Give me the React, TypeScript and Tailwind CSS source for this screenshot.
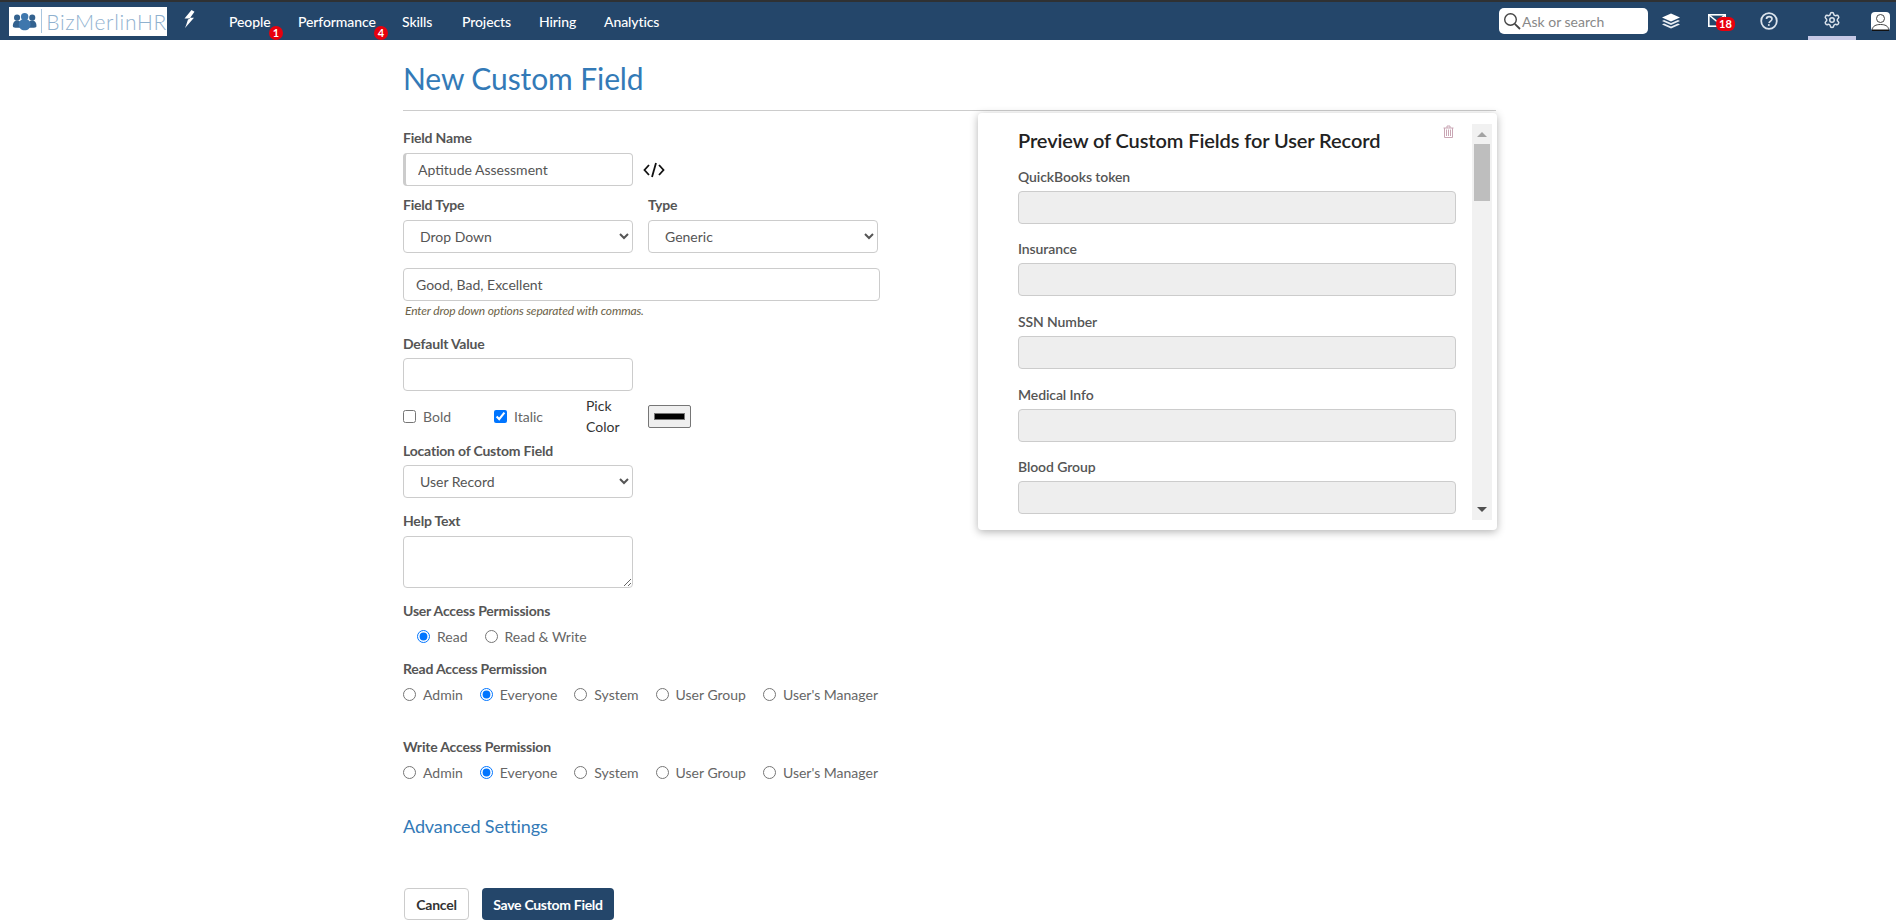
import React from "react";
import { Settings } from "lucide-react";

const Label = ({ children, className = "" }: { children: React.ReactNode; className?: string }) => (
  <label className={`block text-[14px] leading-[20px] font-bold text-[#555] tracking-[-0.2px] ${className}`}>{children}</label>
);

const inputCls = "block h-[33px] border border-[#ccc] rounded-[4px] bg-white text-[14px] text-[#555] outline-none";

const Sel = ({ value, className = "" }: { value: string; className?: string }) => (
  <select defaultValue={value} className={`${inputCls} pl-[12px] pr-[2px] ${className}`}>
    <option>{value}</option>
  </select>
);

const Radio = ({ label, checked, name }: { label: string; checked?: boolean; name: string }) => (
  <label className="flex items-center text-[14px] text-[#666]">
    <input type="radio" name={name} defaultChecked={checked} className="w-[13px] h-[13px] m-0 mr-[7px]" />
    {label}
  </label>
);

const PermRow = ({ name }: { name: string }) => (
  <div className="flex items-center gap-[17px] h-[20px] mt-[5px]">
    <Radio name={name} label="Admin" />
    <Radio name={name} label="Everyone" checked />
    <Radio name={name} label="System" />
    <Radio name={name} label="User Group" />
    <Radio name={name} label="User's Manager" />
  </div>
);

const PreviewField = ({ label, mb = "mb-[14px]" }: { label: string; mb?: string }) => (
  <div className={mb}>
    <div className="text-[14px] leading-[20px] font-semibold text-[#555] tracking-[-0.1px] mb-[4px]">{label}</div>
    <div className="h-[33px] bg-[#eee] border border-[#ccc] rounded-[4px]" />
  </div>
);

const Logo = () => (
  <div className="w-[158px] h-[29px] bg-white flex items-center pl-[3px] ml-[9px]">
    <svg width="30" height="22" viewBox="0 0 30 22">
      <circle cx="6" cy="7" r="3.6" fill="#33628f" />
      <circle cx="24" cy="7" r="3.6" fill="#33628f" />
      <path d="M1 17c0-4 2-6.5 5-6.5s4 1 4 3v5.5H4c-2 0-3-.8-3-2z" fill="#33628f" />
      <path d="M29 17c0-4-2-6.5-5-6.5s-4 1-4 3v5.5h6c2 0 3-.8 3-2z" fill="#33628f" />
      <circle cx="15" cy="6" r="4.4" fill="#3f77ad" />
      <path d="M8 15c0-4 3-6.5 7-6.5s7 2.500 7 6.500c0 4-3 7-7 7s-7-3-7-7z" fill="#3f77ad" />
    </svg>
    <div className="w-px h-[24px] bg-[#a9c6df] ml-[4px] mr-[4px]" />
    <span className="text-[21px] font-light tracking-[0.7px] text-[#8fb1cf] leading-none">BizMerlinHR</span>
  </div>
);

const NavItem = ({ label, w, badge }: { label: string; w: string; badge?: string }) => (
  <div className={`relative ${w} text-white text-[14px] font-medium tracking-[-0.1px]`}>
    {label}
    {badge && (
      <span className="absolute -bottom-[8px] bg-[#e8000d] text-white font-bold text-[11px] leading-[14px] w-[14px] h-[14px] rounded-full text-center" style={{ left: label.length > 6 ? 76 : 40 }}>
        {badge}
      </span>
    )}
  </div>
);

export default function App() {
  return (
    <div className="min-h-[924px] bg-white font-['Lato',sans-serif]">
      <header className="h-[40px] bg-[#24466a] border-t-2 border-[#2f3133] flex items-center relative">
        <Logo />
        <svg width="16" height="18" viewBox="0 0 16 18" className="ml-[15px] mr-[31px] -mt-[4px]">
          <path d="M9.500 0 2.500 8.500h3.800L4.200 15l-1.200 3 9-10.200H8.200L12.500 1.800z" fill="#fff" />
          <path d="M7.500 8 6 9.500" stroke="#24466a" strokeWidth="1" />
        </svg>
        <NavItem label="People" w="w-[69px]" badge="1" />
        <NavItem label="Performance" w="w-[104px]" badge="4" />
        <NavItem label="Skills" w="w-[60px]" />
        <NavItem label="Projects" w="w-[77px]" />
        <NavItem label="Hiring" w="w-[65px]" />
        <NavItem label="Analytics" w="w-[70px]" />
        <div className="ml-auto flex items-center">
          <div className="w-[149px] h-[26px] bg-white rounded-[5px] flex items-center pl-[4px] mr-[13px]">
            <svg width="18" height="18" viewBox="0 0 18 18" fill="none" stroke="#444" strokeWidth="1.400">
              <circle cx="7.500" cy="7.500" r="5.800" />
              <path d="M11.800 11.800 17 17" strokeWidth="1.800" />
            </svg>
            <span className="text-[14px] text-[#888] ml-[1px]">Ask or search</span>
          </div>
          <svg width="20" height="16" viewBox="0 0 20 16" className="mr-[27px]">
            <path d="M10 0.500 19 4.500 10 8.500 1 4.500z" fill="#fff" />
            <path d="M3 7 1 8 10 12 19 8 17 7 10 10z" fill="#e8edf3" />
            <path d="M3 10.500 1 11.500 10 15.500 19 11.500 17 10.500 10 13.500z" fill="#e8edf3" />
          </svg>
          <div className="relative w-[26px] h-[14px] mr-[26px]">
            <svg width="18" height="13" viewBox="0 0 18 13" fill="none" stroke="#fff" strokeWidth="1.600">
              <rect x="0.800" y="0.800" width="16.400" height="11.400" fill="#24466a" />
              <path d="M1 1 9 7.500 17 1" />
            </svg>
            <span className="absolute left-[8px] top-[3px] w-[19px] h-[14px] bg-[#e8000d] rounded-[6px] text-white text-[11px] leading-[14px] font-bold text-center">18</span>
          </div>
          <svg width="18" height="18" viewBox="0 0 18 18" className="mr-[30px]">
            <circle cx="9" cy="9" r="7.800" fill="none" stroke="#dbe3ec" strokeWidth="1.800" />
            <path d="M6.500 7c0-1.500 1.200-2.400 2.700-2.400S12 5.500 12 7c0 1.800-2.500 2.200-3 4" fill="none" stroke="#dbe3ec" strokeWidth="1.700" />
            <circle cx="8.800" cy="13" r="1" fill="#dbe3ec" />
          </svg>
          <div className="w-[48px] h-[38px] flex items-center justify-center border-b-4 border-[#c5c8e6] mr-[15px]">
            <Settings size={18} color="#dbe3ec" strokeWidth={2} className="mt-[2px]" />
          </div>
          <svg width="19" height="19" viewBox="0 0 19 19" className="mr-[6px]">
            <rect x="0" y="0" width="19" height="19" rx="4" fill="#fff" />
            <circle cx="9.500" cy="6.500" r="4" fill="none" stroke="#444" strokeWidth="1" />
            <path d="M1.500 17.500c0-3.500 3.500-5 8-5s8 1.500 8 5" fill="none" stroke="#444" strokeWidth="1" />
            <path d="M1 17.500h17V19H1z" fill="#111" />
          </svg>
        </div>
      </header>

      <main className="ml-[403px] w-[1093px]">
        <h1 className="text-[30px] leading-[36px] text-[#337ab7] font-normal pt-[20px] pb-[14px] border-b border-[#ccc] tracking-[-0.1px]">New Custom Field</h1>

        <div className="flex items-start">
          <div className="w-[575px] shrink-0 pt-[17px]">
            <Label>Field Name</Label>
            <div className="flex items-center mt-[5px]">
              <input readOnly defaultValue="Aptitude Assessment" className={`${inputCls} w-[230px] pl-[12px] border-l-[3px]`} />
              <svg width="22" height="16" viewBox="0 0 22 16" fill="none" stroke="#111" strokeWidth="1.800" className="ml-[10px]">
                <path d="M6 3 1.500 8 6 13" />
                <path d="M16 3l4.500 5-4.500 5" />
                <path d="M13 1 9 15" />
              </svg>
            </div>

            <div className="flex gap-[15px] mt-[9px]">
              <div>
                <Label>Field Type</Label>
                <Sel value="Drop Down" className="w-[230px] mt-[5px]" />
              </div>
              <div>
                <Label>Type</Label>
                <Sel value="Generic" className="w-[230px] mt-[5px]" />
              </div>
            </div>

            <input readOnly defaultValue="Good, Bad, Excellent" className={`${inputCls} w-[477px] mt-[15px] pl-[12px]`} />
            <p className="text-[12px] leading-[16px] italic text-[#6b6248] ml-[2px] mt-[2px] tracking-[-0.15px]">Enter drop down options separated with commas.</p>

            <Label className="mt-[15px]">Default Value</Label>
            <input readOnly className={`${inputCls} w-[230px] mt-[4px]`} />

            <div className="flex items-center h-[24px] mt-[13px] text-[14px] text-[#666]">
              <input type="checkbox" className="w-[13px] h-[13px] m-0" />
              <span className="ml-[7px] w-[71px]">Bold</span>
              <input type="checkbox" defaultChecked className="w-[13px] h-[13px] m-0" />
              <span className="ml-[7px] w-[72px]">Italic</span>
              <span className="text-[#333] w-[62px]">Pick Color</span>
              <input type="color" defaultValue="#000000" className="w-[43px] h-[23px] bg-[#efefef] border border-[#767676] rounded-[2px] p-[3px]" />
            </div>

            <Label className="mt-[13px]">Location of Custom Field</Label>
            <Sel value="User Record" className="w-[230px] mt-[4px]" />

            <Label className="mt-[13px]">Help Text</Label>
            <textarea readOnly className="block w-[230px] h-[52px] mt-[5px] border border-[#ccc] rounded-[4px] bg-white outline-none" />

            <Label className="mt-[13px]">User Access Permissions</Label>
            <div className="flex items-center gap-[17px] h-[20px] mt-[5px] ml-[14px]">
              <Radio name="u" label="Read" checked />
              <Radio name="u" label="Read & Write" />
            </div>

            <Label className="mt-[13px]">Read Access Permission</Label>
            <PermRow name="r" />

            <Label className="mt-[33px]">Write Access Permission</Label>
            <PermRow name="w" />

            <a className="block text-[18px] leading-[24px] text-[#337ab7] mt-[32px] tracking-[-0.1px]">Advanced Settings</a>

            <div className="flex gap-[13px] mt-[50px] ml-[1px]">
              <button className="w-[65px] h-[32px] border border-[#ccc] rounded-[4px] text-[14px] font-bold text-[#333] bg-white tracking-[-0.2px]">Cancel</button>
              <button className="w-[132px] h-[32px] rounded-[4px] text-[14px] font-bold text-white bg-[#24466a] tracking-[-0.3px]">Save Custom Field</button>
            </div>
          </div>

          <section className="relative mt-[2px] w-[519px] h-[417px] bg-white rounded-[4px] shadow-[0_2px_8px_rgba(0,0,0,0.3)] flex pt-[11px] pl-[40px] pr-[5px]">
            <div className="w-[438px] h-[396px] overflow-hidden">
              <h2 className="text-[20px] leading-[28px] font-semibold text-[#222] mt-[2px] mb-[13px] tracking-[-0.1px]">Preview of Custom Fields for User Record</h2>
              <PreviewField label="QuickBooks token" mb="mb-[15px]" />
              <PreviewField label="Insurance" mb="mb-[16px]" />
              <PreviewField label="SSN Number" mb="mb-[16px]" />
              <PreviewField label="Medical Info" mb="mb-[15px]" />
              <PreviewField label="Blood Group" />
            </div>
            <svg width="11" height="13" viewBox="0 0 11 13" fill="none" stroke="#c9a6b4" strokeWidth="1" className="absolute left-[465px] top-[12px]">
              <path d="M0.500 3h10M4 3V1h3v2M1.500 3v9.500h8V3M3.500 4.500v6.500M5.500 4.500v6.500M7.500 4.500v6.500" />
            </svg>
            <div className="ml-[16px] w-[20px] h-[396px] bg-[#f1f1f1] flex flex-col items-center">
              <div className="w-0 h-0 mt-[8px] border-x-[5px] border-x-transparent border-b-[5px] border-b-[#a3a3a3]" />
              <div className="w-[16px] h-[57px] bg-[#bebebe] mt-[7px]" />
              <div className="w-0 h-0 mt-auto mb-[8px] border-x-[5px] border-x-transparent border-t-[5px] border-t-[#505050]" />
            </div>
          </section>
        </div>
      </main>
    </div>
  );
}
